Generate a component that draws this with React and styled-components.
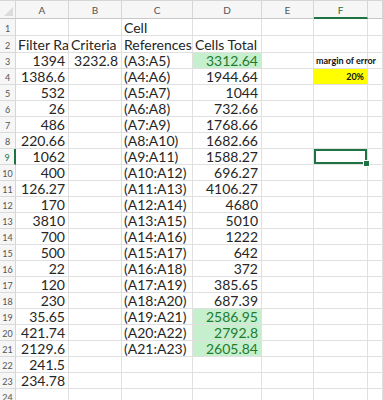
import React from 'react'
import styled, { createGlobalStyle, css } from 'styled-components';

const GlobalStyle = createGlobalStyle`
  html, body { margin: 0; padding: 0; background: #fff; }
  body { font-family: Lato, "Open Sans", sans-serif; }
`

const GREEN = '#1f7244'
const cols = ['A', 'B', 'C', 'D', 'E', 'F', 'G']
const selectedCol = 'F'
const selectedRow = 9

const data = [
  { C: 'Cell' },
  { A: 'Filter Range', B: 'Criteria', C: 'References', D: 'Cells Total' },
  { A: '1394', B: '3232.8', C: '(A3:A5)', D: '3312.64', F: 'margin of error' },
  { A: '1386.6', C: '(A4:A6)', D: '1944.64', F: '20%' },
  { A: '532', C: '(A5:A7)', D: '1044' },
  { A: '26', C: '(A6:A8)', D: '732.66' },
  { A: '486', C: '(A7:A9)', D: '1768.66' },
  { A: '220.66', C: '(A8:A10)', D: '1682.66' },
  { A: '1062', C: '(A9:A11)', D: '1588.27' },
  { A: '400', C: '(A10:A12)', D: '696.27' },
  { A: '126.27', C: '(A11:A13)', D: '4106.27' },
  { A: '170', C: '(A12:A14)', D: '4680' },
  { A: '3810', C: '(A13:A15)', D: '5010' },
  { A: '700', C: '(A14:A16)', D: '1222' },
  { A: '500', C: '(A15:A17)', D: '642' },
  { A: '22', C: '(A16:A18)', D: '372' },
  { A: '120', C: '(A17:A19)', D: '385.65' },
  { A: '230', C: '(A18:A20)', D: '687.39' },
  { A: '35.65', C: '(A19:A21)', D: '2586.95' },
  { A: '421.74', C: '(A20:A22)', D: '2792.8' },
  { A: '2129.6', C: '(A21:A23)', D: '2605.84' },
  { A: '241.5' },
  { A: '234.78' },
  {},
]

const greenCells = ['D3', 'D19', 'D20', 'D21']

const rowHeight = (r) => (r <= 2 ? 17 : 16)

const Sheet = styled.div`
  display: grid;
  grid-template-columns: 16px 53px 53px 71px 69px 52px 54px 1fr;
  grid-template-rows: 18px ${data.map((_, i) => rowHeight(i + 1) + 'px').join(' ')};
  width: 383px;
  height: 400px;
  overflow: hidden;
  border-top: 1px solid #d6d6d6;
  box-sizing: border-box;
`

const Corner = styled.div`
  position: relative;
  background: #f6f6f6;
  border-right: 1px solid #d6d6d6;
  border-bottom: 1px solid #c8c8c8;
  box-sizing: border-box;
  &::after {
    content: '';
    position: absolute;
    right: 2px;
    bottom: 2px;
    border-style: solid;
    border-width: 0 0 9px 9px;
    border-color: transparent transparent #dcdcdc transparent;
  }
`

const ColHead = styled.div`
  background: #f6f6f6;
  border-right: 1px solid #d6d6d6;
  border-bottom: ${p => (p.$active ? `2px solid ${GREEN}` : '1px solid #c8c8c8')};
  box-sizing: border-box;
  display: flex;
  align-items: center;
  justify-content: center;
  font-size: 10px;
  color: ${p => (p.$active ? GREEN : '#555')};
  padding-top: ${p => (p.$active ? '1px' : '0')};
`

const RowHead = styled.div`
  background: #f6f6f6;
  border-right: ${p => (p.$active ? `2px solid ${GREEN}` : '1px solid #d6d6d6')};
  border-bottom: 1px solid #dadada;
  box-sizing: border-box;
  display: flex;
  align-items: flex-end;
  justify-content: center;
  padding-bottom: 1px;
  font-size: 9px;
  line-height: 11px;
  color: ${p => (p.$active ? GREEN : '#555')};
`

const Cell = styled.div`
  position: relative;
  box-sizing: border-box;
  border-right: 1px solid #e0e0e0;
  border-bottom: 1px solid #e0e0e0;
  display: flex;
  align-items: flex-end;
  justify-content: ${p => (p.$right ? 'flex-end' : 'flex-start')};
  padding: 0 3px 0 2px;
  font-size: 14px;
  line-height: 15px;
  color: #262626;
  white-space: nowrap;
  overflow: ${p => (p.$clip ? 'hidden' : 'visible')};
  ${p => p.$good && css`
    background: #c6efce;
    color: #1e7b30;
  `}
  ${p => p.$yellow && css`
    background: #ffff00;
  `}
  ${p => p.$small && css`
    font-size: 9px;
    font-weight: 700;
    line-height: 12px;
    padding-bottom: 1px;
    color: #111;
    z-index: 1;
  `}
  ${p => p.$selected && css`
    box-shadow: inset 0 0 0 2px ${GREEN};
    &::after {
      content: '';
      position: absolute;
      right: -3px;
      bottom: -3px;
      width: 5px;
      height: 5px;
      background: ${GREEN};
      border: 1px solid #fff;
      z-index: 2;
    }
  `}
`

const isNumber = (v) => /^[\d.]+%?$/.test(v)

const App = () => {
  return <>
    <GlobalStyle />
    <Sheet>
      <Corner />
      {cols.map(c => <ColHead key={c} $active={c === selectedCol}>{c === 'G' ? '' : c}</ColHead>)}
      {data.map((row, i) => {
        const r = i + 1
        return <React.Fragment key={r}>
          <RowHead $active={r === selectedRow}>{r}</RowHead>
          {cols.map(c => {
            const v = row[c]
            const ref = c + r
            return <Cell
              key={ref}
              $right={v && isNumber(v)}
              $good={greenCells.includes(ref)}
              $yellow={ref === 'F4'}
              $small={c === 'F' && v}
              $clip={ref === 'A2'}
              $selected={c === selectedCol && r === selectedRow}
            >{v}</Cell>
          })}
        </React.Fragment>
      })}
    </Sheet>
  </>
}

export default App
